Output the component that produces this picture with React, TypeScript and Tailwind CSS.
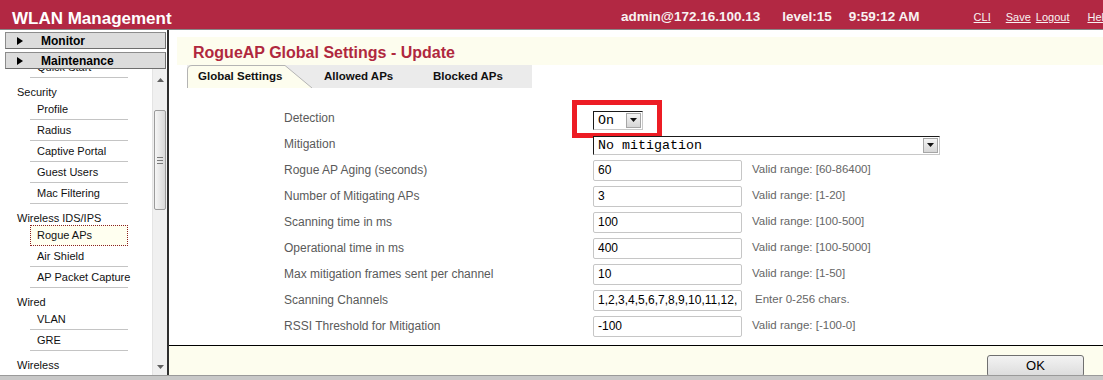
import type { ReactNode } from 'react'

const sans = "font-['Liberation_Sans',Arial,sans-serif]"
const mono = "font-['Liberation_Mono','Courier_New',monospace]"

type NavRow = { text: string; sub?: boolean; active?: boolean }

const nav: NavRow[] = [
  { text: 'Quick Start', sub: true },
  { text: 'Security' },
  { text: 'Profile', sub: true },
  { text: 'Radius', sub: true },
  { text: 'Captive Portal', sub: true },
  { text: 'Guest Users', sub: true },
  { text: 'Mac Filtering', sub: true },
  { text: 'Wireless IDS/IPS' },
  { text: 'Rogue APs', sub: true, active: true },
  { text: 'Air Shield', sub: true },
  { text: 'AP Packet Capture', sub: true },
  { text: 'Wired' },
  { text: 'VLAN', sub: true },
  { text: 'GRE', sub: true },
  { text: 'Wireless' },
]

type Field = { label: string; value?: string; hint?: string; kind?: 'detect' | 'mitig'; wideHint?: boolean }

const fields: Field[] = [
  { label: 'Detection', kind: 'detect' },
  { label: 'Mitigation', kind: 'mitig' },
  { label: 'Rogue AP Aging (seconds)', value: '60', hint: 'Valid range: [60-86400]' },
  { label: 'Number of Mitigating APs', value: '3', hint: 'Valid range: [1-20]' },
  { label: 'Scanning time in ms', value: '100', hint: 'Valid range: [100-500]' },
  { label: 'Operational time in ms', value: '400', hint: 'Valid range: [100-5000]' },
  { label: 'Max mitigation frames sent per channel', value: '10', hint: 'Valid range: [1-50]' },
  { label: 'Scanning Channels', value: '1,2,3,4,5,6,7,8,9,10,11,12,13', hint: 'Enter 0-256 chars.', wideHint: true },
  { label: 'RSSI Threshold for Mitigation', value: '-100', hint: 'Valid range: [-100-0]' },
]

function DownArrow() {
  return (
    <svg width="7" height="4" viewBox="0 0 7 4">
      <path d="M0 0H7L3.5 4Z" fill="#111" />
    </svg>
  )
}

function MenuButton({ label }: { label: string }) {
  return (
    <div className="ml-[5px] mr-[1px] h-[17px] shrink-0 flex items-center bg-[#dcdcdc] border border-[#8c8c8c] border-b-[#6e6e6e] border-r-[#6e6e6e]">
      <svg width="6" height="8" viewBox="0 0 6 8" className="ml-[11px]">
        <path d="M0 0L6 4L0 8Z" fill="#000" />
      </svg>
      <span className="ml-[18px] text-[12px] font-bold leading-[14px] text-black">{label}</span>
    </div>
  )
}

function ScrollBar() {
  return (
    <div className="w-[15px] shrink-0 flex flex-col bg-[#f0f0f0] border-l border-[#e4e4e4]">
      <div className="h-[22px] flex items-center justify-center">
        <svg width="7" height="4" viewBox="0 0 7 4">
          <path d="M0 4L3.5 0L7 4Z" fill="#606060" />
        </svg>
      </div>
      <div className="h-[19px]" />
      <div className="h-[100px] mx-px rounded-[2px] border border-[#9c9c9c] bg-linear-to-r from-[#f6f6f6] to-[#d9d9d9] flex flex-col items-center justify-center gap-[2px]">
        <div className="w-[6px] h-px bg-[#7a7a7a]" />
        <div className="w-[6px] h-px bg-[#7a7a7a]" />
        <div className="w-[6px] h-px bg-[#7a7a7a]" />
      </div>
      <div className="flex-1" />
      <div className="h-[17px] flex items-center justify-center">
        <svg width="7" height="4" viewBox="0 0 7 4">
          <path d="M0 0H7L3.5 4Z" fill="#606060" />
        </svg>
      </div>
    </div>
  )
}

function Sidebar() {
  return (
    <aside className="w-[169px] shrink-0 border-r-2 border-[#2e2e2e] flex flex-col pt-[2px]">
      <MenuButton label="Monitor" />
      <div className="h-[3px] shrink-0" />
      <MenuButton label="Maintenance" />
      <div className="flex flex-1 min-h-0">
        <div className="w-[152px] overflow-hidden">
          <div className="-mt-[12px] text-[11px] text-[#111] whitespace-nowrap">
            {nav.map((row) =>
              row.sub ? (
                <div
                  key={row.text}
                  className={
                    row.active
                      ? 'ml-[30px] w-[98px] h-[21px] pl-[6px] flex items-center border border-dotted border-[#8b2020] bg-[#fffff0]'
                      : 'ml-[30px] w-[98px] h-[21px] pl-[7px] flex items-center border-b border-[#c4c4c4]'
                  }
                >
                  {row.text}
                </div>
              ) : (
                <div key={row.text} className="h-[21px] pl-[17px] pt-[7px] leading-[15px]">
                  {row.text}
                </div>
              ),
            )}
          </div>
        </div>
        <ScrollBar />
      </div>
    </aside>
  )
}

function SelectBox({ value, className, children }: { value: string; className: string; children?: ReactNode }) {
  return (
    <div
      className={`${className} relative h-[19px] flex items-center bg-white border border-t-[#1a1a1a] border-l-[#1a1a1a] border-b-[#c8c8c8] border-r-[#c8c8c8]`}
    >
      <span className={`${mono} pl-[4px] text-[13.33px] leading-[15px] text-black`}>{value}</span>
      <div className="ml-auto mr-px w-[15px] h-[15px] flex items-center justify-center border border-[#a6a6a6] bg-linear-to-b from-[#f4f4f4] to-[#d6d6d6]">
        <DownArrow />
      </div>
      {children}
    </div>
  )
}

function FieldRow({ f }: { f: Field }) {
  return (
    <div className="h-[26px] flex items-center">
      <div className="w-[309px] text-[12px] text-[#5a5a5a]">{f.label}</div>
      {f.kind === 'detect' && (
        <SelectBox value="On" className="w-[50px] top-[2px]">
          <div className="absolute left-[-22px] top-[-12px] w-[90px] h-[38px] border-[5px] border-[#ed1c24] pointer-events-none" />
        </SelectBox>
      )}
      {f.kind === 'mitig' && <SelectBox value="No mitigation" className="w-[347px] top-[1px]" />}
      {f.value !== undefined && (
        <>
          <input
            readOnly
            value={f.value}
            className="w-[149px] h-[21px] px-[4px] text-[12px] text-black bg-white border border-[#c6c6c6] rounded-[2px] outline-none"
          />
          <span className={`${f.wideHint ? 'ml-[13px]' : 'ml-[10px]'} text-[11.5px] text-[#666]`}>{f.hint}</span>
        </>
      )}
    </div>
  )
}

function Tabs() {
  return (
    <div className="ml-[18px] w-[345px] h-[23px] shrink-0 flex bg-[#ebebeb] text-[11.5px] font-bold text-[#111]">
      <div className="relative w-[125px] h-full flex items-center pl-[11px] pt-px">
        <svg width="125" height="23" viewBox="0 0 125 23" className="absolute inset-0">
          <path d="M0.5 23V5Q0.5 0.5 5 0.5H98L125 23" fill="#fdfdee" stroke="#b4b4b4" />
        </svg>
        <span className="relative">Global Settings</span>
      </div>
      <div className="w-[109px] h-full flex items-center pl-[12px] pt-px">Allowed APs</div>
      <div className="h-full flex items-center pl-[12px] pt-px">Blocked APs</div>
    </div>
  )
}

export default function App() {
  return (
    <div className={`${sans} w-[1103px] h-[380px] overflow-hidden flex flex-col bg-white`}>
      {/* Top bar */}
      <header className="h-[30px] shrink-0 bg-[#b22843] border-b border-[#888] flex items-start pt-[9px] text-[#f8f2f2] whitespace-nowrap overflow-hidden">
        <div className="w-[621px] shrink-0 pl-[12px] text-[17px] leading-[20px] font-bold text-white">WLAN Management</div>
        <span className="text-[13.5px] leading-[16px] font-bold">admin@172.16.100.13</span>
        <span className="ml-[22px] text-[13.5px] leading-[16px] font-bold">level:15</span>
        <span className="ml-[17px] text-[13.5px] leading-[16px] font-bold">9:59:12 AM</span>
        <a className="ml-[54px] text-[11px] leading-[16px] underline">CLI</a>
        <a className="ml-[15px] text-[11px] leading-[16px] underline">Save</a>
        <a className="ml-[5px] text-[11px] leading-[16px] underline">Logout</a>
        <a className="ml-[18px] text-[11px] leading-[16px] underline">Help</a>
      </header>

      <div className="flex flex-1 min-h-0">
        <Sidebar />

        <main className="flex-1 min-w-0 flex flex-col">
          <div className="ml-[8px] mt-[7px] h-[28px] shrink-0 bg-[#fdfdee] pl-[16px] pt-[6px] text-[16px] leading-[20px] font-bold text-[#b0283e]">
            RogueAP Global Settings - Update
          </div>
          <Tabs />

          <div className="mt-[17px] pl-[115px]">
            {fields.map((f) => (
              <FieldRow key={f.label} f={f} />
            ))}
          </div>

          <div className="flex-1" />
          <div className="h-[30px] shrink-0 border-t border-black bg-[#fdfdee] flex justify-end pr-[19px] overflow-hidden">
            <button className="mt-[9px] w-[97px] h-[22px] shrink-0 rounded-[3px] border border-[#707070] bg-linear-to-b from-[#f3f3f3] to-[#dcdcdc] text-[13px] text-black">
              OK
            </button>
          </div>
        </main>
      </div>

      <div className="h-[5px] shrink-0 bg-[#c8c8c8] border-t border-[#9a9a9a]" />
    </div>
  )
}
